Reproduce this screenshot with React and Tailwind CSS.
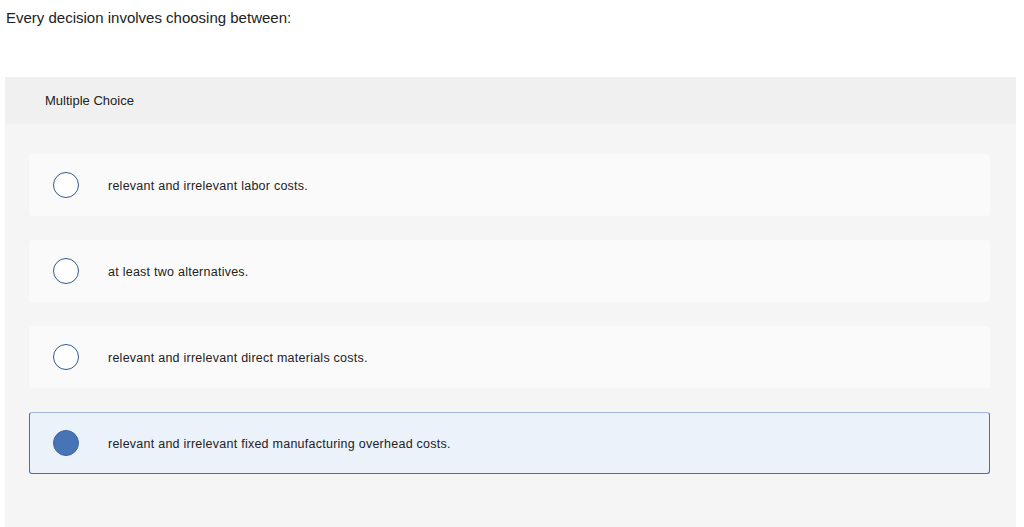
import React, { useState } from 'react';

const options = [
  "relevant and irrelevant labor costs.",
  "at least two alternatives.",
  "relevant and irrelevant direct materials costs.",
  "relevant and irrelevant fixed manufacturing overhead costs.",
];

const App = () => {
  const [selected, setSelected] = useState(3);

  return (
    <div className="w-[1024px] h-[527px] overflow-hidden bg-white text-[#222] font-['Liberation_Sans',Arial,sans-serif]">
      {/* Question */}
      <div className="pl-[6px] pt-[8px] h-[77px] text-[15px] leading-[20px]">
        Every decision involves choosing between:
      </div>

      {/* Answer panel */}
      <div className="ml-[5px] w-[1011px] h-[450px] bg-[#f5f5f5]">
        <div className="h-[47px] bg-[#f0f0f0] flex items-center pl-[40px] text-[13px] pt-[1px]">
          Multiple Choice
        </div>
        <div className="pt-[30px] pl-[24px] pr-[26px] flex flex-col gap-[24px]">
          {options.map((opt, i) => {
            const isSel = selected === i;
            return (
              <div
                key={i}
                onClick={() => setSelected(i)}
                className={
                  isSel
                    ? "h-[62px] rounded-[3px] bg-[#ebf2fa] border border-[#3f72b5] border-t-[#9fb8d9] flex items-center cursor-pointer"
                    : "h-[62px] rounded-[4px] bg-[#fafafa] border border-transparent flex items-center cursor-pointer"
                }
              >
                <div className="ml-[23px] w-[26px] h-[26px] shrink-0">
                  {isSel ? (
                    <div className="w-full h-full rounded-full bg-[#4674b4] border border-[#3b64a0]" />
                  ) : (
                    <div className="w-full h-full rounded-full border border-[#2f5a92] bg-white" />
                  )}
                </div>
                <span className="ml-[29px] pt-[2px] text-[12.5px] tracking-[0.25px]">{opt}</span>
              </div>
            );
          })}
        </div>
      </div>
    </div>
  );
};

export default App;
